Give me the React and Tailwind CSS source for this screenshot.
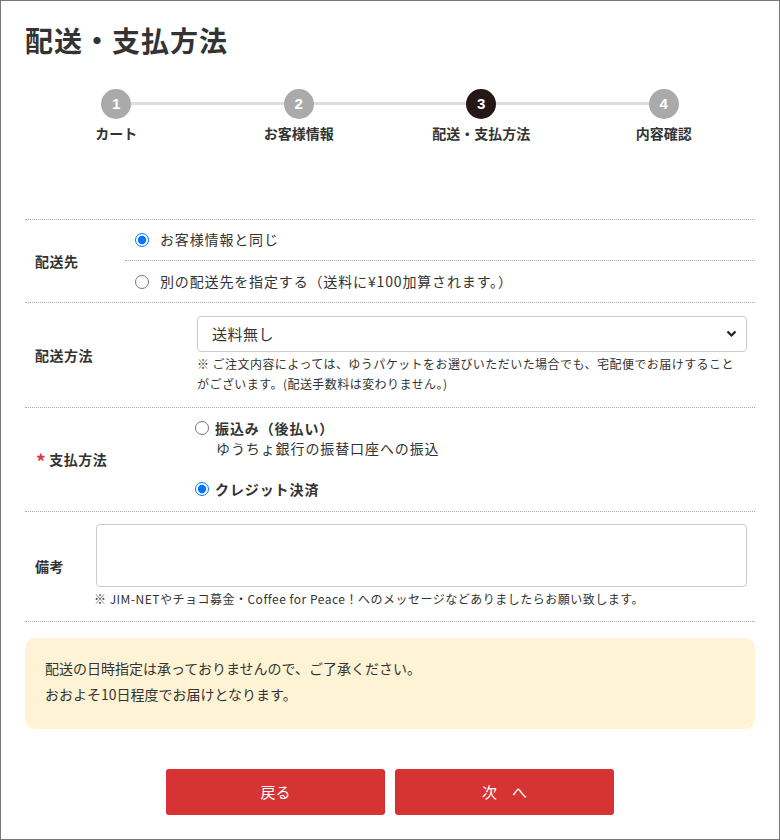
import React from "react";

const steps = [
  { n: 1, label: "カート", active: false },
  { n: 2, label: "お客様情報", active: false },
  { n: 3, label: "配送・支払方法", active: true },
  { n: 4, label: "内容確認", active: false },
];

function Radio({ checked }) {
  return (
    <input
      type="radio"
      readOnly
      checked={checked}
      className="m-0 w-[14px] h-[14px] shrink-0"
    />
  );
}

export default function App() {
  return (
    <div className="w-[780px] h-[840px] border border-[#777] bg-white px-[24px] pt-[19px] text-[#333] font-['Noto_Sans_CJK_JP','Noto_Sans',sans-serif]">
      <h1 className="text-[28px] leading-[40px] font-bold tracking-[1px]">配送・支払方法</h1>

      {/* stepper */}
      <div className="relative mt-[29px] grid grid-cols-4">
        <div className="absolute left-[91px] right-[91px] top-[13px] h-[3px] bg-[#ddd]" />
        {steps.map((s) => (
          <div key={s.n} className="relative flex flex-col items-center">
            <div
              className={
                "w-[30px] h-[30px] rounded-full flex items-center justify-center text-white text-[15px] font-bold font-['Liberation_Sans',sans-serif] " +
                (s.active ? "bg-[#231815]" : "bg-[#aaa]")
              }
            >
              {s.n}
            </div>
            <div className="mt-[4px] text-[14px] leading-[20px] font-bold">{s.label}</div>
          </div>
        ))}
      </div>

      {/* form table */}
      <div className="mt-[76px] border-t border-dotted border-[#aaa]">
        {/* 配送先 */}
        <div className="flex border-b border-dotted border-[#aaa]">
          <div className="w-[100px] pl-[10px] flex items-center text-[14px] font-bold tracking-[0.5px]">配送先</div>
          <div className="flex-1 flex flex-col">
            <label className="h-[41px] pl-[10px] pb-[1px] flex items-center gap-[11px] text-[14px] tracking-[0.85px] border-b border-dotted border-[#aaa]">
              <Radio checked />
              <span>お客様情報と同じ</span>
            </label>
            <label className="h-[41px] pl-[10px] flex items-center gap-[11px] text-[14px] tracking-[0.85px]">
              <Radio checked={false} />
              <span>別の配送先を指定する（送料に¥100加算されます。）</span>
            </label>
          </div>
        </div>

        {/* 配送方法 */}
        <div className="flex border-b border-dotted border-[#aaa]">
          <div className="w-[172px] pl-[10px] flex items-center text-[14px] font-bold tracking-[0.5px]">配送方法</div>
          <div className="flex-1 pt-[13px] pb-[13px] pr-[8px]">
            <div className="relative">
              <select className="appearance-none w-full h-[36px] border border-[#ccc] rounded-[4px] bg-white pl-[14px] text-[15px] tracking-[0.5px] text-[#333]">
                <option>送料無し</option>
              </select>
              <svg
                className="absolute right-[10px] top-[14px] pointer-events-none"
                width="11"
                height="8"
                viewBox="0 0 11 8"
              >
                <path d="M1.5 1.5 L5.5 5.5 L9.5 1.5" fill="none" stroke="#222" strokeWidth="2.2" />
              </svg>
            </div>
            <p className="mt-[2px] text-[12px] leading-[20px] tracking-[0.45px]">
              ※ ご注文内容によっては、ゆうパケットをお選びいただいた場合でも、宅配便でお届けすること
              <br />
              がございます。(配送手数料は変わりません。)
            </p>
          </div>
        </div>

        {/* 支払方法 */}
        <div className="flex border-b border-dotted border-[#aaa]">
          <div className="w-[170px] pl-[11px] flex items-center text-[14px] font-bold tracking-[0.5px]">
            <span className="text-[#e0393e] text-[19px] leading-[20px] mr-[3px] pt-[3px]">*</span>支払方法
          </div>
          <div className="flex-1 pt-[10px] pb-[12px] text-[14px] leading-[20px] tracking-[0.9px]">
            <label className="flex items-center gap-[6px]">
              <Radio checked={false} />
              <span className="font-bold">振込み（後払い）</span>
            </label>
            <div className="pl-[21px]">ゆうちょ銀行の振替口座への振込</div>
            <label className="mt-[21px] flex items-center gap-[6px]">
              <Radio checked />
              <span className="font-bold">クレジット決済</span>
            </label>
          </div>
        </div>

        {/* 備考 */}
        <div className="flex border-b border-dotted border-[#aaa]">
          <div className="w-[71px] pl-[10px] flex items-center text-[14px] font-bold tracking-[0.5px]">備考</div>
          <div className="flex-1 pt-[12px] pb-[12px] pr-[8px]">
            <textarea className="block w-full h-[63px] border border-[#ccc] rounded-[4px] resize-none" />
            <p className="mt-[2px] -ml-[2px] text-[12px] leading-[20px] tracking-[0.5px]">
              ※ JIM-NETやチョコ募金・Coffee for Peace！へのメッセージなどありましたらお願い致します。
            </p>
          </div>
        </div>
      </div>

      {/* notice */}
      <div className="mt-[16px] rounded-[10px] bg-[#fef3d5] pl-[20px] pt-[17px] pb-[22px] text-[14px] leading-[26px]">
        <p>配送の日時指定は承っておりませんので、ご了承ください。</p>
        <p>おおよそ10日程度でお届けとなります。</p>
      </div>

      {/* buttons */}
      <div className="mt-[40px] flex justify-center gap-[10px]">
        <button className="w-[219px] h-[46px] rounded-[3px] bg-[#d63434] text-white text-[15px]">戻る</button>
        <button className="w-[219px] h-[46px] rounded-[3px] bg-[#d63434] text-white text-[15px]">次　へ</button>
      </div>
    </div>
  );
}
